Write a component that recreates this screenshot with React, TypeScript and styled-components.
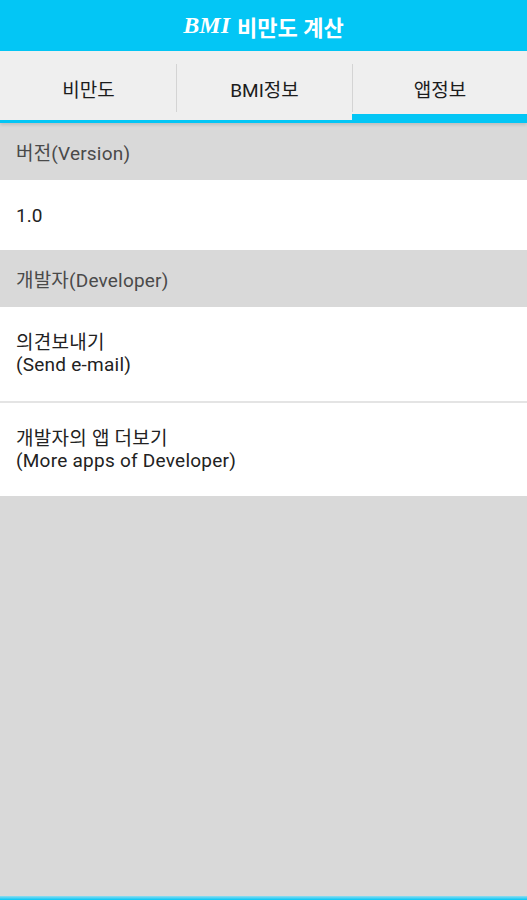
import styled, { createGlobalStyle } from "styled-components";

const GlobalStyle = createGlobalStyle`
  html, body {
    margin: 0;
    padding: 0;
    background-color: #d9d9d9;
  }
  #root {
    min-height: 100vh;
    display: flex;
    flex-direction: column;
  }
  * {
    box-sizing: border-box;
  }
`;

const CYAN = "#03c6f5";
const FONT = `Roboto, "Noto Sans CJK KR", sans-serif`;

const Screen = styled.div`
  flex: 1;
  display: flex;
  flex-direction: column;
  font-family: ${FONT};
`;

const Header = styled.header`
  height: 51px;
  background-color: ${CYAN};
  display: flex;
  align-items: center;
  justify-content: center;
  color: #ffffff;
  font-size: 22px;
  font-weight: 700;
`;

const Brand = styled.span`
  font-family: "Liberation Serif", "DejaVu Serif", serif;
  font-style: italic;
  font-weight: 700;
  font-size: 24px;
  margin-right: 7px;
`;

const TabBar = styled.nav`
  display: grid;
  grid-template-columns: 176px 176px 1fr;
  background-color: #efefef;
  box-shadow: 0 2px 3px rgba(0, 0, 0, 0.12);
  position: relative;
  z-index: 1;
`;

const Tab = styled.div<{ $active: boolean }>`
  height: 72px;
  padding-top: 13px;
  border-bottom: ${(props) => (props.$active ? "9px" : "3px")} solid ${CYAN};
`;

const TabLabel = styled.div<{ $divided: boolean }>`
  height: 48px;
  display: flex;
  align-items: center;
  justify-content: center;
  border-left: 1px solid ${(props) => (props.$divided ? "#d4d4d4" : "transparent")};
  font-size: 19px;
  color: #1c1c1c;
`;

const SectionHeader = styled.div`
  height: 57px;
  padding: 0 16px;
  display: flex;
  align-items: center;
  background-color: #d9d9d9;
  font-size: 19px;
  letter-spacing: 0.2px;
  color: #4a4a4a;
`;

const ValueRow = styled.div`
  height: 70px;
  padding: 0 16px;
  display: flex;
  align-items: center;
  background-color: #ffffff;
  font-size: 19px;
  color: #222222;
`;

const LinkRow = styled.div<{ $divider: boolean }>`
  height: ${(props) => (props.$divider ? "96px" : "93px")};
  padding: 0 16px;
  display: flex;
  flex-direction: column;
  justify-content: center;
  background-color: #ffffff;
  border-bottom: ${(props) => (props.$divider ? "2px solid #e4e4e4" : "none")};
  font-size: 19px;
  line-height: 22px;
  letter-spacing: 0.25px;
  color: #222222;
`;

const Filler = styled.div`
  flex: 1;
  background-color: #d9d9d9;
`;

const BottomLine = styled.div`
  height: 4px;
  background: linear-gradient(#8fdcf0, ${CYAN});
`;

const tabs = ["비만도", "BMI정보", "앱정보"];
const activeTab = 2;

const links = [
  { ko: "의견보내기", en: "(Send e-mail)" },
  { ko: "개발자의 앱 더보기", en: "(More apps of Developer)" },
];

function App() {
  return (
    <>
      <GlobalStyle />
      <Screen>
        <Header>
          <Brand>BMI</Brand>비만도 계산
        </Header>
        <TabBar>
          {tabs.map((tab, index) => (
            <Tab key={tab} $active={index === activeTab}>
              <TabLabel $divided={index > 0}>{tab}</TabLabel>
            </Tab>
          ))}
        </TabBar>
        <SectionHeader>버전(Version)</SectionHeader>
        <ValueRow>1.0</ValueRow>
        <SectionHeader>개발자(Developer)</SectionHeader>
        {links.map((link, index) => (
          <LinkRow key={link.en} $divider={index < links.length - 1}>
            <span>{link.ko}</span>
            <span>{link.en}</span>
          </LinkRow>
        ))}
        <Filler />
        <BottomLine />
      </Screen>
    </>
  );
}

export default App;
